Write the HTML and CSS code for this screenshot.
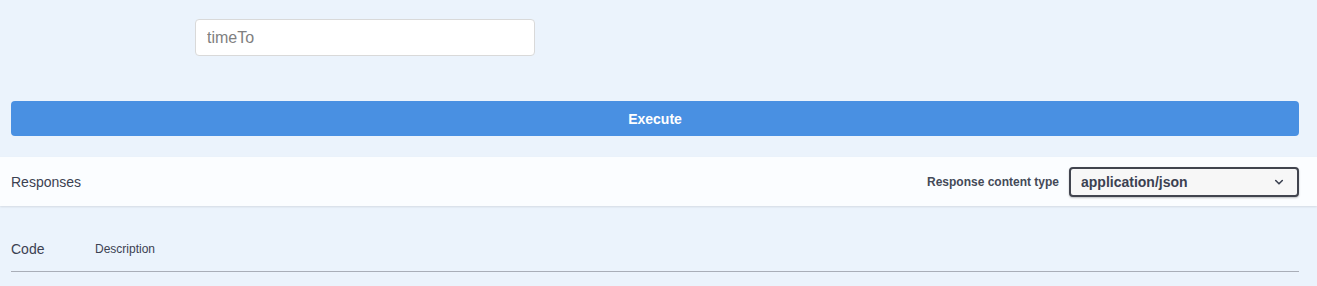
FILE: index.html
```html
<!DOCTYPE html>
<html lang="en">
<head>
    <meta charset="UTF-8">
    <meta name="viewport" content="width=device-width, initial-scale=1.0">
    <title>Swagger Operation</title>
    <link rel="stylesheet" href="styles.css">
</head>
<body>
    <div class="opblock">
        <div class="param-row">
            <input type="text" class="param-input" placeholder="timeTo">
        </div>

        <div class="execute-wrapper">
            <button class="btn-execute">Execute</button>
        </div>

        <div class="responses-header">
            <h4>Responses</h4>
            <div class="content-type">
                <label for="contentType">Response content type</label>
                <div class="select-wrap">
                    <select id="contentType">
                        <option>application/json</option>
                    </select>
                    <svg class="chevron" width="12" height="12" viewBox="0 0 20 20">
                        <path d="M4.5 7.5 L10 13 L15.5 7.5" fill="none" stroke="#3b4151" stroke-width="2.6" stroke-linecap="round" stroke-linejoin="round"/>
                    </svg>
                </div>
            </div>
        </div>

        <div class="responses-inner">
            <table class="responses-table">
                <thead>
                    <tr>
                        <th class="col-code">Code</th>
                        <th class="col-desc">Description</th>
                    </tr>
                </thead>
            </table>
        </div>
    </div>
</body>
</html>
```

FILE: styles.css
```css
html, body {
    margin: 0;
    padding: 0;
}
body {
    font-family: "Liberation Sans", Arial, sans-serif;
    background-color: #ebf3fc;
    color: #3b4151;
    height: 286px;
    overflow: hidden;
}
.opblock {
    background-color: #ebf3fc;
}
.param-row {
    padding: 19px 0 0 195px;
    height: 37px;
}
.param-input {
    box-sizing: border-box;
    width: 340px;
    height: 37px;
    margin: 0;
    padding: 0 11px;
    font-family: inherit;
    font-size: 16px;
    color: #3b4151;
    background: #fff;
    border: 1px solid #d9d9d9;
    border-radius: 4px;
    outline: none;
}
.param-input::placeholder {
    color: #808080;
}
.execute-wrapper {
    padding: 45px 18px 21px 11px;
}
.btn-execute {
    display: block;
    width: 100%;
    height: 35px;
    padding: 0;
    border: none;
    border-radius: 4px;
    background-color: #4990e2;
    color: #fff;
    font-family: inherit;
    font-size: 14px;
    font-weight: 700;
    cursor: pointer;
}
.responses-header {
    display: flex;
    align-items: center;
    justify-content: space-between;
    height: 49px;
    padding: 0 18px 0 11px;
    background-color: rgba(255, 255, 255, 0.8);
    box-shadow: 0 1px 2px rgba(0, 0, 0, 0.1);
}
.responses-header h4 {
    margin: 0;
    font-size: 14px;
    font-weight: 400;
    color: #3b4151;
}
.content-type {
    display: flex;
    align-items: center;
    gap: 10px;
}
.content-type label {
    font-size: 12px;
    font-weight: 700;
    color: #444a58;
}
.select-wrap {
    position: relative;
}
.select-wrap select {
    box-sizing: border-box;
    width: 230px;
    height: 30px;
    padding: 0 10px;
    font-family: inherit;
    font-size: 14px;
    font-weight: 700;
    color: #3b4151;
    background: #f7f7f7;
    border: 2px solid #41444e;
    border-radius: 4px;
    box-shadow: 0 1px 2px rgba(0, 0, 0, 0.25);
    appearance: none;
    -webkit-appearance: none;
}
.chevron {
    position: absolute;
    right: 14px;
    top: 9px;
    pointer-events: none;
}
.responses-inner {
    padding: 35px 18px 0 11px;
}
.responses-table {
    width: 100%;
    border-collapse: collapse;
}
.responses-table th {
    text-align: left;
    padding: 0 0 14px 0;
    color: #3b4151;
    border-bottom: 1px solid #a9aeb8;
}
.col-code {
    width: 84px;
    font-size: 14px;
    font-weight: 400;
}
.col-desc {
    font-size: 12px;
    font-weight: 400;
}
```
